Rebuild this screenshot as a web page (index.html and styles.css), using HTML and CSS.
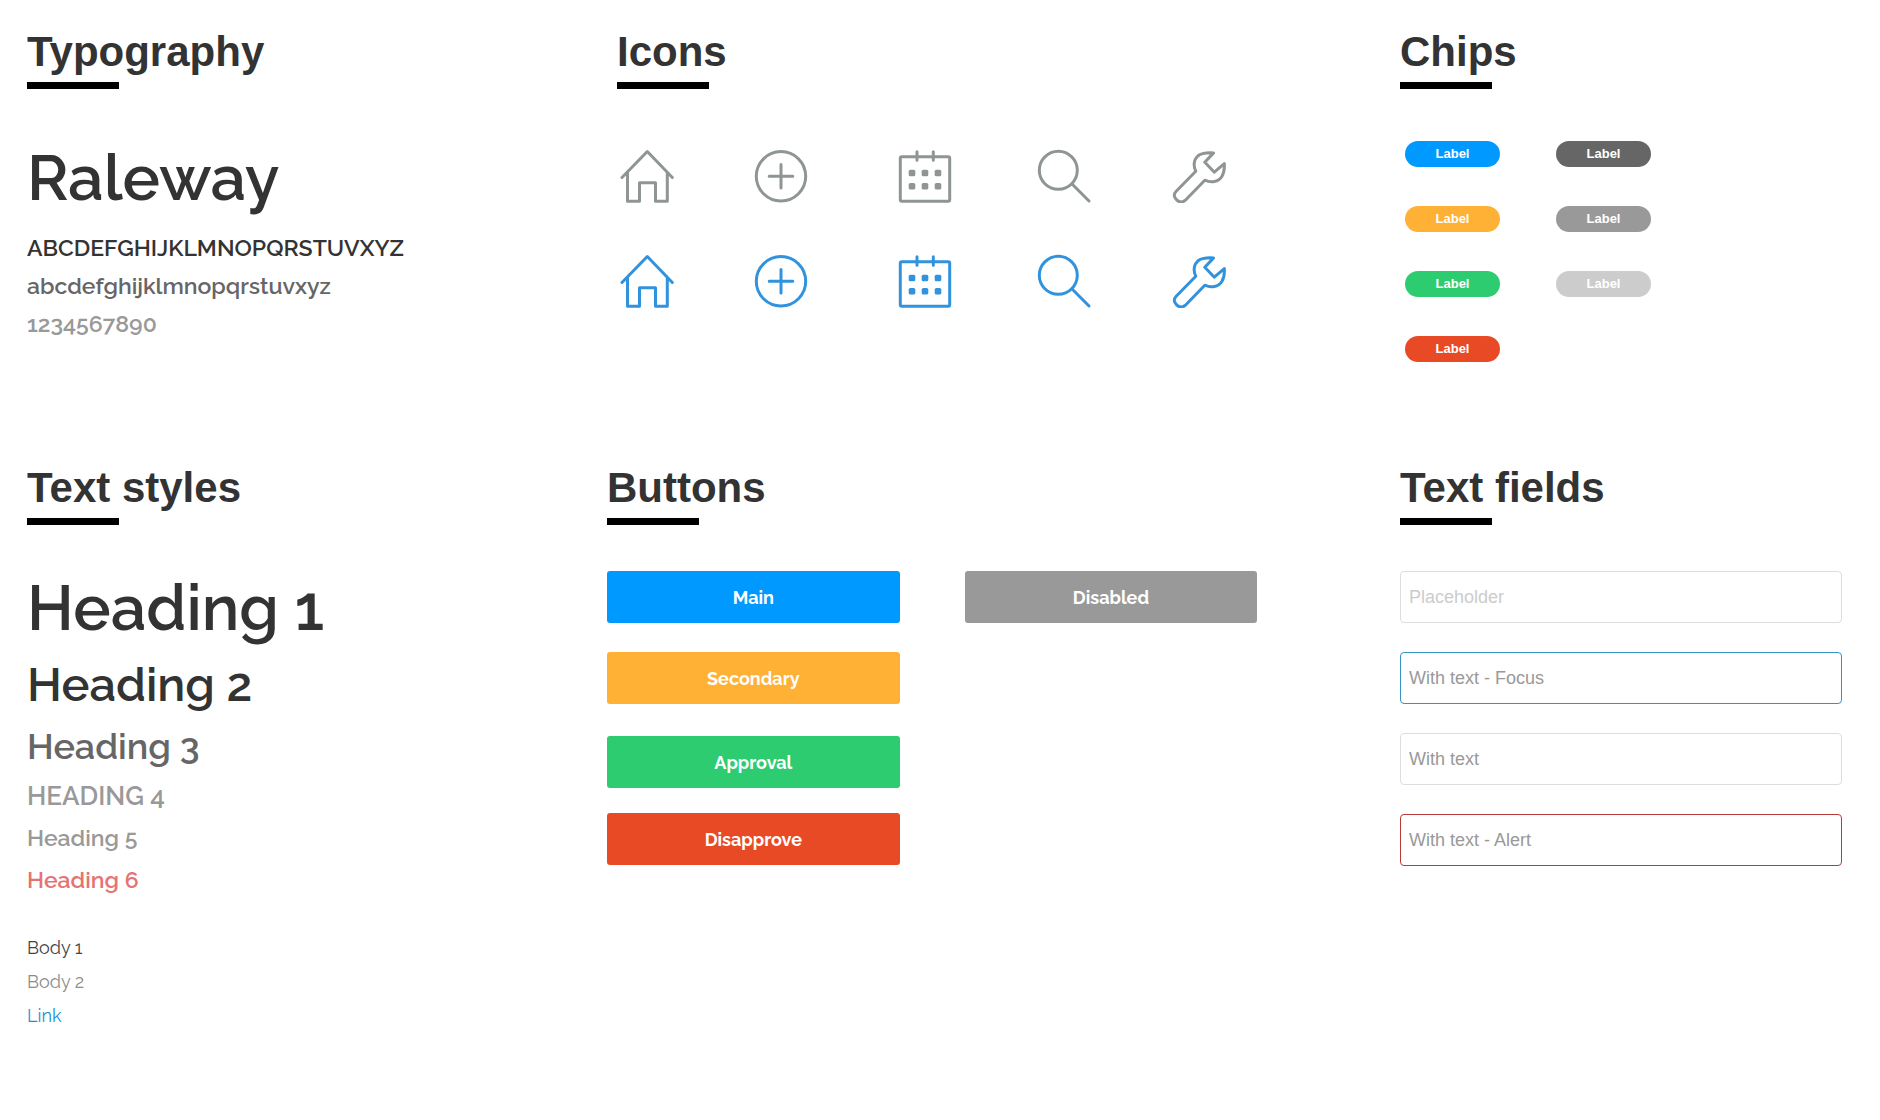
FILE: index.html
```html
<!DOCTYPE html>
<html lang="en">
<head>
<meta charset="utf-8">
<meta name="viewport" content="width=device-width, initial-scale=1">
<title>Style guide</title>
<link rel="stylesheet" href="styles.css">
</head>
<body>
<svg class="sprite" aria-hidden="true">
  <symbol id="home" viewBox="-1 -1 54 54">
    <path d="M1 27.500 26.300 1.500 51.300 27.500M6.500 22.500V51.300H18.500V32.700H34.500V51.300H46.300V22.500"/>
  </symbol>
  <symbol id="add" viewBox="-1 -1 54 54">
    <circle cx="26" cy="26.300" r="24.700"/>
    <path d="M26 14.500V38M14.200 26.300H37.800"/>
  </symbol>
  <symbol id="calendar" viewBox="-1 -1 54 54">
    <rect x="1.300" y="6.700" width="49.400" height="44.600" rx="1.500"/>
    <path d="M18 1.800V10.200M34.300 1.800V10.200"/>
    <g class="dots">
      <rect x="9.700" y="19.700" width="6.600" height="6.600" rx="1.600"/>
      <rect x="22.700" y="19.700" width="6.600" height="6.600" rx="1.600"/>
      <rect x="35.700" y="19.700" width="6.600" height="6.600" rx="1.600"/>
      <rect x="9.700" y="32.900" width="6.600" height="6.600" rx="1.600"/>
      <rect x="22.700" y="32.900" width="6.600" height="6.600" rx="1.600"/>
      <rect x="35.700" y="32.900" width="6.600" height="6.600" rx="1.600"/>
    </g>
  </symbol>
  <symbol id="search" viewBox="-1 -1 54 54">
    <circle cx="20.300" cy="20.300" r="19"/>
    <path d="M33.800 33.800 51 51"/>
  </symbol>
  <symbol id="wrench" viewBox="-1 -1 54 54">
    <path d="M40.600 2.900 31.800 12.300 41.300 22.200 51.300 13.600C51.600 18 51.200 22.600 49 26.200C45.400 32.200 38 33.200 31.800 30.200L12.400 50.200C9.300 53 6.300 52.400 3.600 49.800C.8 47.200.4 44.200 3.200 41.200L22.800 21.300C20.200 16.200 20.600 9.800 24.800 6C29 2.400 35.400 2.600 40.600 2.900Z"/>
  </symbol>
</svg>

<main class="guide">
  <section class="section">
    <h2 class="title">Typography</h2>
    <div class="specimen">
      <p class="typeface">Raleway</p>
      <p class="glyphs">ABCDEFGHIJKLMNOPQRSTUVXYZ</p>
      <p class="glyphs glyphs-mid">abcdefghijklmnopqrstuvxyz</p>
      <p class="glyphs glyphs-light">1234567890</p>
    </div>
  </section>

  <section class="section section-icons">
    <h2 class="title">Icons</h2>
    <div class="icons">
      <svg class="icon"><use href="#home"/></svg>
      <svg class="icon"><use href="#add"/></svg>
      <svg class="icon"><use href="#calendar"/></svg>
      <svg class="icon"><use href="#search"/></svg>
      <svg class="icon"><use href="#wrench"/></svg>
      <svg class="icon icon-active"><use href="#home"/></svg>
      <svg class="icon icon-active"><use href="#add"/></svg>
      <svg class="icon icon-active"><use href="#calendar"/></svg>
      <svg class="icon icon-active"><use href="#search"/></svg>
      <svg class="icon icon-active"><use href="#wrench"/></svg>
    </div>
  </section>

  <section class="section">
    <h2 class="title">Chips</h2>
    <div class="chips">
      <div class="chip-column">
        <span class="chip blue">Label</span>
        <span class="chip orange">Label</span>
        <span class="chip green">Label</span>
        <span class="chip red">Label</span>
      </div>
      <div class="chip-column">
        <span class="chip dark">Label</span>
        <span class="chip grey">Label</span>
        <span class="chip pale">Label</span>
      </div>
    </div>
  </section>

  <section class="section">
    <h2 class="title">Text styles</h2>
    <div class="styles">
      <h1 class="h1">Heading 1</h1>
      <h2 class="h2">Heading 2</h2>
      <h3 class="h3">Heading 3</h3>
      <h4 class="h4">HEADING 4</h4>
      <h5 class="h5">Heading 5</h5>
      <h6 class="h6">Heading 6</h6>
      <div class="copy">
        <p class="body-1">Body 1</p>
        <p class="body-2">Body 2</p>
        <a class="link" href="#">Link</a>
      </div>
    </div>
  </section>

  <section class="section">
    <h2 class="title">Buttons</h2>
    <div class="buttons">
      <button class="button blue" type="button">Main</button>
      <button class="button grey" type="button" disabled>Disabled</button>
      <button class="button orange" type="button">Secondary</button>
      <button class="button green" type="button">Approval</button>
      <button class="button red" type="button">Disapprove</button>
    </div>
  </section>

  <section class="section">
    <h2 class="title">Text fields</h2>
    <form class="fields">
      <input class="field" type="text" placeholder="Placeholder" aria-label="Empty field">
      <input class="field field-focus" type="text" value="With text - Focus" aria-label="Focused field">
      <input class="field" type="text" value="With text" aria-label="Filled field">
      <input class="field field-alert" type="text" value="With text - Alert" aria-label="Field with an alert">
    </form>
  </section>
</main>
</body>
</html>
```
FILE: styles.css
```css
:root {
  --ink: #333;
  --mid: #666;
  --light: #999;
  --pale: #ccc;
  --blue: #0099ff;
  --orange: #ffb136;
  --green: #2ecc71;
  --red: #e74a25;
  --brand: Raleway, Lato, sans-serif;
  --plain: "Liberation Sans", Arial, sans-serif;
}

* { box-sizing: border-box; }

body {
  margin: 0;
  background: #fff;
  color: var(--ink);
  font-family: var(--plain);
}

h1, h2, h3, h4, h5, h6, p { margin: 0; }

.sprite { display: none; }

.guide {
  display: grid;
  grid-template-columns: 580fr 793fr 442fr;
  row-gap: 102px;
  padding: 28px 38px 32px 27px;
}

.section-icons { padding-left: 10px; }

.title {
  font-size: 42px;
  line-height: 48px;
  font-weight: 700;
}

.title::after {
  content: "";
  display: block;
  width: 92px;
  height: 7px;
  margin-top: 6px;
  background: #000;
}

/* Typography */
.specimen {
  margin-top: 51px;
  font-family: var(--brand);
  font-weight: 600;
}

.typeface {
  margin-bottom: 13px;
  font-size: 63px;
  line-height: 76px;
}

.glyphs {
  font-size: 23px;
  line-height: 38px;
}

.glyphs-mid { color: var(--mid); }
.glyphs-light { color: var(--light); }

/* Icons */
.icons {
  display: grid;
  grid-template-columns: 134fr 144fr 139fr 135fr 54px;
  row-gap: 51px;
  max-width: 609px;
  margin-top: 60px;
  padding-left: 3px;
}

.icon {
  width: 54px;
  height: 54px;
  fill: none;
  stroke: #8f9494;
  stroke-width: 3;
  stroke-linecap: round;
  stroke-linejoin: round;
  color: #8f9494;
}

.icon-active {
  stroke: #3193de;
  color: #3193de;
}

.dots {
  fill: currentColor;
  stroke: none;
}

/* Colours shared by chips and buttons */
.blue { background: var(--blue); }
.orange { background: var(--orange); }
.green { background: var(--green); }
.red { background: var(--red); }
.dark { background: var(--mid); }
.grey { background: var(--light); }
.pale { background: var(--pale); }

/* Chips */
.chips {
  display: flex;
  gap: 56px;
  margin-top: 52px;
  padding-left: 5px;
}

.chip-column {
  display: flex;
  flex-direction: column;
  gap: 39px;
}

.chip {
  width: 95px;
  border-radius: 13px;
  color: #fff;
  font-size: 13px;
  font-weight: 700;
  line-height: 26px;
  text-align: center;
}

/* Text styles */
.styles {
  display: flex;
  flex-direction: column;
  gap: 10px;
  margin-top: 45px;
  font-family: var(--brand);
}

.h1, .h2, .h3, .h4, .h5, .h6 { font-weight: 600; }
.h1, .h2, .h3 { margin-bottom: 2px; }
.h1 { font-size: 63px; line-height: 76px; }
.h2 { font-size: 47px; line-height: 54px; }
.h3 { font-size: 36px; line-height: 44px; color: var(--mid); }
.h4, .h5, .h6 { line-height: 32px; color: var(--light); }
.h4 { font-size: 26px; }
.h5, .h6 { font-size: 23px; }
.h6 { color: #e57373; }

.copy {
  display: flex;
  flex-direction: column;
  align-items: flex-start;
  gap: 10px;
  margin-top: 30px;
  font-size: 18px;
  font-weight: 400;
  line-height: 24px;
}

.body-1 { color: #444; }
.body-2 { color: #8c8c8c; }
.link { color: #1f8fd6; text-decoration: none; }

/* Buttons */
.buttons {
  display: grid;
  grid-template-columns: 292fr 292fr;
  grid-template-rows: 81px 84px 77px 52px;
  column-gap: 65px;
  width: 82%;
  margin-top: 46px;
}

.button {
  grid-column: 1;
  height: 52px;
  padding: 0;
  border: 0;
  border-radius: 3px;
  color: #fff;
  font-family: var(--brand);
  font-size: 18px;
  font-weight: 700;
}

.button:disabled {
  grid-column: 2;
  grid-row: 1;
}

/* Text fields */
.fields {
  display: flex;
  flex-direction: column;
  gap: 29px;
  margin-top: 46px;
}

.field {
  width: 100%;
  height: 52px;
  padding: 0 8px;
  border: 1px solid #ddd;
  border-radius: 4px;
  background: #fff;
  color: var(--light);
  font-family: var(--plain);
  font-size: 18px;
}

.field::placeholder { color: var(--pale); opacity: 1; }
.field-focus { border-color: #3592c4; }
.field-alert { border-color: #b93a3a; }
```
